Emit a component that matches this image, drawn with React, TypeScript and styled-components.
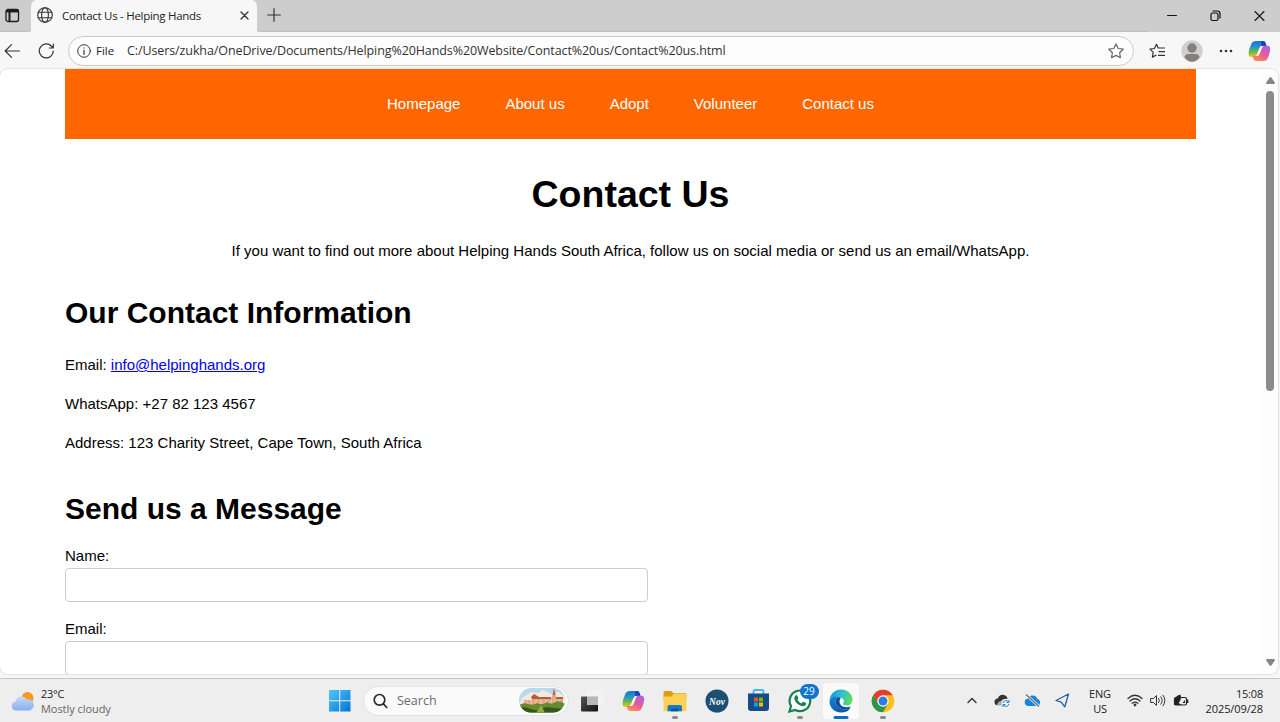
import React from "react";
import styled, { createGlobalStyle } from "styled-components";

const GlobalStyle = createGlobalStyle`
  * { box-sizing: border-box; }
  html, body { margin: 0; padding: 0; overflow: hidden; }
  svg { display: block; flex: none; }
`;

const UI_FONT = `"Open Sans", "Noto Sans", sans-serif`;

const Screen = styled.div`
  width: 1280px;
  height: 722px;
  display: flex;
  flex-direction: column;
  overflow: hidden;
  background: #f7f7f7;
  font-family: ${UI_FONT};
  color: #1f1f1f;
`;

const Label = styled.span<{ $size?: number; $track?: number; $color?: string }>`
  white-space: pre;
  font-size: ${(p) => p.$size ?? 12}px;
  letter-spacing: ${(p) => p.$track ?? 0}px;
  color: ${(p) => p.$color ?? "#222"};
`;

const TabStrip = styled.header`
  flex: none;
  height: 32px;
  display: flex;
  background: #cdcdcd;
`;
const TabActions = styled.div`
  width: 31px;
  padding: 8px 0 0 5px;
  border-bottom: 1px solid #bfbfbf;
  border-bottom-right-radius: 5px;
`;
const Tab = styled.div`
  width: 226px;
  display: flex;
  align-items: center;
  padding: 0 8px 2px 6px;
  background: #f7f7f7;
  border-radius: 6px 6px 0 0;
`;
const TabTitle = styled(Label)`
  margin-left: 9px;
  flex: 1;
`;
const NewTab = styled.div`
  flex: 1;
  padding: 8px 0 0 10px;
  border-bottom: 1px solid #bfbfbf;
  border-bottom-left-radius: 5px;
`;
const WindowButtons = styled.div`
  width: 132px;
  display: flex;
  justify-content: space-between;
  padding: 9px 15px 0 19px;
`;

const Toolbar = styled.div`
  flex: none;
  height: 37px;
  display: flex;
  align-items: center;
  padding: 0 9px 0 4px;
`;
const NavButtons = styled.div`
  width: 64px;
  display: flex;
  gap: 17px;
`;
const AddressBar = styled.div`
  width: 1066px;
  height: 30px;
  display: flex;
  align-items: center;
  padding: 0 9px 0 8px;
  background: #fdfdfd;
  border: 1px solid #cbcbcb;
  border-radius: 15px;
`;
const Scheme = styled(Label)`
  width: 31px;
  margin: 0 0 0 5px;
`;
const Url = styled(Label)`
  flex: 1;
`;
const ToolbarIcons = styled.div`
  flex: 1;
  display: flex;
  align-items: center;
  justify-content: space-between;
  padding-left: 15px;
`;

const Viewport = styled.div`
  flex: none;
  width: 1278px;
  height: 605px;
  display: flex;
  overflow: hidden;
  background: #fff;
  border-radius: 8px;
  box-shadow: 0 0 1px 1px #e0e0e0;
`;
const Page = styled.main`
  width: 1261px;
  height: 605px;
  padding: 0 65px;
  overflow: hidden;
  font-family: "Liberation Sans", Arial, sans-serif;
  font-size: 15px;
  color: #000;
`;
const SiteNav = styled.nav`
  height: 70px;
  display: flex;
  justify-content: center;
  gap: 45px;
  padding-top: 26px;
  background: #ff6600;
  color: #fff;
  line-height: 17px;
`;
const Title = styled.h1`
  margin: 32px 0 0;
  font-size: 37.5px;
  line-height: 46px;
  text-align: center;
`;
const Intro = styled.p`
  margin: 25px 0 0;
  line-height: 18px;
  text-align: center;
`;
const Heading = styled.h2<{ $top: number }>`
  margin: ${(p) => p.$top}px 0 0;
  font-size: 30px;
  line-height: 36px;
`;
const ContactList = styled.div`
  display: flex;
  flex-direction: column;
  gap: 21px;
  padding-top: 25px;
  line-height: 18px;
`;
const MailLink = styled.a`
  color: #0000ee;
  text-decoration: underline;
`;
const Field = styled.label<{ $top: number }>`
  display: block;
  margin-top: ${(p) => p.$top}px;
  line-height: 18px;
`;
const TextInput = styled.input`
  display: block;
  width: 583px;
  height: 34px;
  margin-top: 3px;
  background: #fff;
  border: 1px solid #ccc;
  border-radius: 4px;
`;
const Scrollbar = styled.div`
  flex: 1;
  display: flex;
  flex-direction: column;
  align-items: center;
  padding: 8px 0 8px 1px;
  background: #fdfdfd;
`;
const Thumb = styled.div`
  width: 8px;
  height: 300px;
  margin: 7px 0 auto;
  border-radius: 4px;
  background: #8b8b8b;
`;

const Taskbar = styled.footer`
  flex: none;
  height: 44px;
  margin-top: 4px;
  display: flex;
  align-items: center;
  background: #eee;
  border-top: 1px solid #c6c6c6;
`;
const Weather = styled.div`
  width: 328px;
  display: flex;
  align-items: center;
  gap: 6px;
  padding-left: 11px;
`;
const Stack = styled.div<{ $align: string }>`
  display: flex;
  flex-direction: column;
  align-items: ${(p) => p.$align};
  line-height: 15px;
`;
const SearchBox = styled.div`
  width: 206px;
  height: 30px;
  margin: 0 9px 0 12px;
  display: flex;
  align-items: center;
  padding: 0 3px 0 9px;
  background: #fafafa;
  border: 1px solid #e2e2e2;
  border-radius: 15px;
`;
const SearchText = styled(Label)`
  flex: 1;
  padding-left: 9px;
`;
const Apps = styled.div`
  display: flex;
  gap: 5.5px;
`;
const AppSlot = styled.div<{ $active?: boolean }>`
  position: relative;
  width: 36px;
  height: 36px;
  display: flex;
  align-items: center;
  justify-content: center;
  border-radius: 4px;
  background: ${(p) => (p.$active ? "#fafafa" : "transparent")};
`;
const RunMark = styled.i<{ $active?: boolean }>`
  position: absolute;
  bottom: 0;
  left: 50%;
  width: ${(p) => (p.$active ? 15 : 6)}px;
  height: 3px;
  transform: translateX(-50%);
  border-radius: 2px;
  background: ${(p) => (p.$active ? "#0f6cbd" : "#8a8a8a")};
`;
const Badge = styled.span`
  position: absolute;
  top: 1px;
  right: -1px;
  width: 19px;
  height: 15px;
  border-radius: 8px;
  background: #0f76cc;
  color: #fff;
  font-size: 10px;
  line-height: 15px;
  text-align: center;
`;
const Tray = styled.div`
  flex: 1;
  display: flex;
  align-items: center;
  justify-content: flex-end;
  padding-right: 17px;
`;
const TrayItem = styled.div<{ $w: number }>`
  width: ${(p) => p.$w}px;
  display: flex;
  justify-content: center;
`;

const line = { fill: "none", stroke: "#333", strokeWidth: 1.2, strokeLinecap: "round", strokeLinejoin: "round" } as const;

const CopilotIcon = ({ id }: { id: string }) => (
  <svg width="23" height="22" viewBox="0 0 23 22">
    <defs>
      <linearGradient id={`${id}a`} x1="0" y1="0" x2="0" y2="1">
        <stop offset="0" stopColor="#1b75d8" /><stop offset=".35" stopColor="#2394cf" /><stop offset=".65" stopColor="#62b851" /><stop offset="1" stopColor="#f4c315" />
      </linearGradient>
      <linearGradient id={`${id}b`} x1=".8" y1="0" x2=".2" y2="1">
        <stop offset="0" stopColor="#a964e8" /><stop offset=".5" stopColor="#e9599a" /><stop offset="1" stopColor="#fb9150" />
      </linearGradient>
    </defs>
    <path d="M8 1h7q2 0 2.6 2l.9 3h-2q-2 0-2.7 2l-2.4 7q-.8 2-2.9 2H3.500Q.2 17 .6 12.500Q1 9 3.500 3.500Q4.500 1 8 1Z" fill={`url(#${id}a)`} />
    <path d="M13 1h2q2 0 2.600 2l.9 3h-2.500q-2 0-2.700 2Z" fill="#1747b0" />
    <path d="M15 21H8q-2 0-2.600-2L4.800 16h1.700q2 0 2.800-2l2.400-6q.8-2.300 3-2.300h4.500q3.400 0 3 4.300Q22 13 19.500 18.500Q18.500 21 15 21Z" fill={`url(#${id}b)`} />
    <path d="M13.300 6q-1.300.4-1.800 2l-2.400 6q-.5 1.500-1.800 2h2.400q1.300-.4 1.800-2l2.400-6q.4-1.400 1.500-2Z" fill="#fff" />
  </svg>
);

const StarIcon = () => (
  <svg width="16" height="16" viewBox="0 0 16 16" {...line} stroke="#666">
    <path d="m8 1 2.200 4.500 5 .7-3.600 3.500.8 5L8 12.400 3.600 14.700l.8-5L.8 6.200l5-.7Z" />
  </svg>
);

const FavoritesIcon = () => (
  <svg width="17" height="16" viewBox="0 0 17 16" {...line}>
    <path d="M9.200 4.900 7.500 1.300 5.400 5.500 1 6.200l3.200 3.200-.8 4.700L7 12.200M9.200 5h6.300M10 8.700h5.500M9.500 12.400h6" />
  </svg>
);

const App = () => (
  <>
    <GlobalStyle />
    <Screen>
      <TabStrip>
        <TabActions>
          <svg width="15" height="15" viewBox="0 0 15 15" fill="none" stroke="#1d1d1d" strokeWidth="1.300">
            <rect x="1" y="1.500" width="12.500" height="12" rx="2" /><path d="M1 3.300h12.500M4.500 4v9" strokeWidth="2" />
            <path d="M1 3h12.500" strokeWidth="2.500" />
          </svg>
        </TabActions>
        <Tab>
          <svg width="16" height="16" viewBox="0 0 16 16" {...line} strokeWidth="1.100">
            <circle cx="8" cy="8" r="7.300" /><ellipse cx="8" cy="8" rx="3.400" ry="7.300" /><path d="M1.200 5.300h13.600M1.200 10.700h13.600" />
          </svg>
          <TabTitle $size={11.5} $track={-0.28}>Contact Us - Helping Hands</TabTitle>
          <svg width="9" height="9" viewBox="0 0 9 9" {...line} strokeWidth="1.300"><path d="m1 1 7 7M8 1 1 8" /></svg>
        </Tab>
        <NewTab>
          <svg width="14" height="14" viewBox="0 0 14 14" {...line}><path d="M7 .7v12.600M.7 7h12.600" /></svg>
        </NewTab>
        <WindowButtons>
          <svg width="10" height="12" viewBox="0 0 10 12" {...line} stroke="#111"><path d="M.6 6.500h8.800" /></svg>
          <svg width="11" height="13" viewBox="0 0 11 13" {...line} stroke="#111"><rect x="1" y="4" width="7" height="7.500" rx="1.500" /><path d="M3 2h4.500Q10 2 10 4.500V9" /></svg>
          <svg width="11" height="13" viewBox="0 0 11 13" {...line} stroke="#111" strokeWidth="1.100"><path d="m1 2.500 9 9M10 2.500l-9 9" /></svg>
        </WindowButtons>
      </TabStrip>

      <Toolbar>
        <NavButtons>
          <svg width="17" height="16" viewBox="0 0 17 16" {...line}><path d="M15.500 8H1.200M7.500 1.700 1.200 8l6.300 6.300" /></svg>
          <svg width="17" height="16" viewBox="0 0 17 16" {...line}><path d="M15.300 8a7 7 0 1 1-2-5l1.700 1.700M15.300 1v4h-4" /></svg>
        </NavButtons>
        <AddressBar>
          <svg width="14" height="14" viewBox="0 0 14 14" {...line} strokeWidth="1"><circle cx="7" cy="7" r="6.300" /><path d="M7 6.300v4M7 3.900v.2" strokeWidth="1.200" /></svg>
          <Scheme $size={11.5} $track={0}>File</Scheme>
          <Url $size={12.5} $track={-0.1} $color="#333">C:/Users/zukha/OneDrive/Documents/Helping%20Hands%20Website/Contact%20us/Contact%20us.html</Url>
          <StarIcon />
        </AddressBar>
        <ToolbarIcons>
          <FavoritesIcon />
          <svg width="22" height="22" viewBox="0 0 22 22">
            <circle cx="11" cy="11" r="10.700" fill="#d2d0ce" /><circle cx="11" cy="8" r="4.700" fill="#85807c" />
            <path d="M3.500 17.500q.5-3.500 3.500-3.500h8q3 0 3.500 3.500Q15.500 21.700 11 21.700t-7.500-4.200Z" fill="#85807c" />
          </svg>
          <svg width="14" height="4" viewBox="0 0 14 4" fill="#333"><circle cx="2" cy="2" r="1.300" /><circle cx="7" cy="2" r="1.300" /><circle cx="12" cy="2" r="1.300" /></svg>
          <CopilotIcon id="bar" />
        </ToolbarIcons>
      </Toolbar>

      <Viewport>
        <Page>
          <SiteNav>
            <span>Homepage</span><span>About us</span><span>Adopt</span><span>Volunteer</span><span>Contact us</span>
          </SiteNav>
          <Title>Contact Us</Title>
          <Intro>If you want to find out more about Helping Hands South Africa, follow us on social media or send us an email/WhatsApp.</Intro>
          <Heading $top={35}>Our Contact Information</Heading>
          <ContactList>
            <span>Email: <MailLink>info@helpinghands.org</MailLink></span>
            <span>WhatsApp: +27 82 123 4567</span>
            <span>Address: 123 Charity Street, Cape Town, South Africa</span>
          </ContactList>
          <Heading $top={39}>Send us a Message</Heading>
          <Field $top={20}>Name:<TextInput /></Field>
          <Field $top={18}>Email:<TextInput /></Field>
        </Page>
        <Scrollbar>
          <svg width="9" height="7" viewBox="0 0 9 7"><path d="M4.500 0Q5 0 5.500.8L8.800 5.500Q9 7 8 7H1Q0 7 .2 5.500L3.500.8Q4 0 4.500 0Z" fill="#858585" /></svg>
          <Thumb />
          <svg width="9" height="7" viewBox="0 0 9 7"><path d="M4.500 7Q5 7 5.500 6.200L8.800 1.500Q9 0 8 0H1Q0 0 .2 1.500L3.500 6.200Q4 7 4.500 7Z" fill="#858585" /></svg>
        </Scrollbar>
      </Viewport>

      <Taskbar>
        <Weather>
          <svg width="24" height="22" viewBox="0 0 24 22">
            <defs><linearGradient id="cloud" x1="0" y1="0" x2="0" y2="1"><stop offset="0" stopColor="#c5dafa" /><stop offset="1" stopColor="#85aff0" /></linearGradient></defs>
            <circle cx="16.500" cy="8" r="6" fill="#f69a1d" />
            <path d="M5 20.500a4.600 4.600 0 0 1-.5-9.100A6.300 6.300 0 0 1 16 9.500a5.500 5.500 0 0 1 2.500 11Z" fill="url(#cloud)" />
          </svg>
          <Stack $align="flex-start">
            <Label $size={11} $track={-0.3}>23°C</Label>
            <Label $size={11} $track={-0.05} $color="#666">Mostly cloudy</Label>
          </Stack>
        </Weather>
        <svg width="23" height="23" viewBox="0 0 23 23">
          <defs><linearGradient id="win" x1="0" y1="0" x2="1" y2="1"><stop offset="0" stopColor="#50c8f8" /><stop offset="1" stopColor="#0573d2" /></linearGradient></defs>
          <path d="M1 1h10.200v10.200H1ZM12.200 1H22.500v10.200H12.200ZM1 12.200h10.200V22.500H1ZM12.200 12.200H22.500V22.500H12.200Z" fill="url(#win)" />
        </svg>
        <SearchBox>
          <svg width="15" height="16" viewBox="0 0 15 16" fill="none" stroke="#2b2b2b" strokeWidth="1.700" strokeLinecap="round"><circle cx="6.500" cy="6.800" r="5.300" /><path d="m10.400 10.900 3.300 3.600" /></svg>
          <SearchText $size={12.5} $track={0} $color="#6b6b6b">Search</SearchText>
          <svg width="46" height="25" viewBox="0 0 46 25">
            <defs><clipPath id="oval"><rect width="46" height="24.500" rx="12.200" /></clipPath></defs>
            <g clipPath="url(#oval)">
              <rect width="46" height="25" fill="#b7dbec" />
              <path d="M3 10 12 4l7 1 5-3 8 4 8-2 6 5v8H0Z" fill="#f5e8e2" />
              <path d="M5 12h8V8h6v2h14V8l1.500-8L37 8v2h7v9H5Z" fill="#dfa987" />
              <path d="m12 9 3-3 5 3h12v2H13ZM34 7l1-7 1.500 7ZM37 9h7v2h-7Z" fill="#b85b3c" />
              <path d="M8 13v3M12 12v4M17 12v4M22 12v4M27 12v4M32 12v4M36 11v5M40 12v4" stroke="#f6d4b3" />
              <path d="M0 17q5-3 9-1 5 2 9-1 5 3 10-1 4 3 8 0 5-2 10 2v9H0Z" fill="#648b2e" />
              <path d="M0 20q6-2 12 1t15-2q8 1 19 2v4H0Z" fill="#31591d" />
              <path d="m17 25 5-8 4 8" fill="#91ac45" />
            </g>
          </svg>
        </SearchBox>
        <Apps>
          <AppSlot style={{ marginLeft: -4 }}>
            <svg width="23" height="22" viewBox="0 0 23 22">
              <defs><linearGradient id="tv" x1="0" y1="0" x2="1" y2="1"><stop offset="0" stopColor="#555" /><stop offset="1" stopColor="#111" /></linearGradient></defs>
              <rect x="0" y="6.500" width="17" height="15" rx="1" fill="url(#tv)" /><rect x="6" y="0" width="16.500" height="15" rx="1" fill="#f4f4f4" opacity=".88" /><path d="M6 6.500h11V15H6Z" fill="#b7b7b7" />
            </svg>
          </AppSlot>
          <AppSlot><CopilotIcon id="task" /></AppSlot>
          <AppSlot>
            <svg width="24" height="22" viewBox="0 0 24 22">
              <path d="M.5 2.500Q.5 1 2 1h6l2.500 2H22q1.500 0 1.500 1.500v5H.5Z" fill="#dc9d13" />
              <path d="M.5 6.500h8L11 3.500h11q1.500 0 1.500 1.500v15q0 1.300-1.500 1.300H2Q.5 21.300.5 20Z" fill="#fbd154" />
              <path d="M4.500 21.300V17q0-2 2-2h10.500q2 0 2 2v4.300Z" fill="#1778c8" /><path d="M8 18.500h7.500v2.800H8Z" fill="#0b5596" />
            </svg>
            <RunMark />
          </AppSlot>
          <AppSlot>
            <svg width="24" height="24" viewBox="0 0 24 24">
              <circle cx="12" cy="12" r="11.500" fill="#1b4f73" />
              <text x="12" y="15.500" textAnchor="middle" fill="#fff" fontFamily="Liberation Serif, serif" fontStyle="italic" fontWeight="bold" fontSize="9.500">Nov</text>
            </svg>
          </AppSlot>
          <AppSlot>
            <svg width="23" height="23" viewBox="0 0 23 23">
              <path d="M6.500 5V2.300Q6.500 1 8 1h7q1.500 0 1.500 1.300V5" fill="none" stroke="#43b8ef" strokeWidth="1.800" />
              <path d="M1 4.500h21V19q0 3-3 3H4q-3 0-3-3Z" fill="#164b85" />
              <path d="M7 8.500h4v4H7Z" fill="#f25022" /><path d="M12 8.500h4v4h-4Z" fill="#7fba00" /><path d="M7 13.500h4v4H7Z" fill="#00a4ef" /><path d="M12 13.500h4v4h-4Z" fill="#ffb900" />
            </svg>
          </AppSlot>
          <AppSlot>
            <svg width="24" height="24" viewBox="0 0 24 24">
              <path d="M1.500 22.500 3 17A10.300 10.300 0 1 1 7.200 21Z" fill="#fff" stroke="#17804f" strokeWidth="2.200" />
              <path d="M7.300 6.700q1.200-1.300 2 0l1 2.300q.2.700-.9 1.800 1.500 2.700 4 3.600l1.300-1.400q.5-.5 1.200-.1l2 1q.8.500.2 1.700-1.300 2-3.700 1.600-6-1.600-8-6.800-.4-2 .9-3.700Z" fill="#17804f" />
            </svg>
            <Badge>29</Badge>
            <RunMark />
          </AppSlot>
          <AppSlot $active>
            <svg width="24" height="24" viewBox="0 0 24 24">
              <defs>
                <linearGradient id="edgeTop" x1="0" y1=".3" x2="1" y2=".5"><stop offset="0" stopColor="#1b91dd" /><stop offset=".5" stopColor="#2bc1d2" /><stop offset="1" stopColor="#65dc55" /></linearGradient>
                <linearGradient id="edgeLow" x1="0" y1="0" x2="1" y2="1"><stop offset="0" stopColor="#1782d8" /><stop offset="1" stopColor="#0b4b99" /></linearGradient>
              </defs>
              <path d="M.5 11.500C1 5 6 .5 12 .5c7 0 11.500 5 11.500 10 0 4-3 6-6 6-2.500 0-4-1-3.500-2 1.500-2 1-5-2.500-6C7 7 3 8 .5 11.500Z" fill="url(#edgeTop)" />
              <path d="M.5 12C2 8 6 6.500 10 8c-3 1-4 4-3 7 1.500 4.500 6.500 6 11 5 2-.5 3-1.500 3.500-1-2 3-5.500 4.500-9.500 4.500C5 23.500.2 18 .5 12Z" fill="url(#edgeLow)" />
              <path d="M10 8c-3 1-4 4-3 7 1.500 4.500 6.500 6 11 5 2-.5 3.500-2 3.500-2.500-6 2-11-.5-11-5 0-2 1-3 1.500-3.500Q11 8.300 10 8Z" fill="#0d4f9d" />
            </svg>
            <RunMark $active />
          </AppSlot>
          <AppSlot>
            <svg width="24" height="24" viewBox="0 0 24 24">
              <circle cx="12" cy="12" r="11.300" fill="#fbc116" />
              <path d="M2.200 6.350A11.300 11.300 0 0 1 21.800 6.350L12 6.350 7.100 14.800Z" fill="#df4032" />
              <path d="M2.200 6.350A11.300 11.300 0 0 0 12 23.300L16.900 14.800H7.100Z" fill="#28984b" />
              <circle cx="12" cy="12" r="5.700" fill="#fff" /><circle cx="12" cy="12" r="4.500" fill="#3479e6" />
            </svg>
            <RunMark />
          </AppSlot>
        </Apps>
        <Tray>
          <TrayItem $w={30}><svg width="10" height="7" viewBox="0 0 10 7" {...line} strokeWidth="1.400"><path d="m1 5.500 4-4 4 4" /></svg></TrayItem>
          <TrayItem $w={30}>
            <svg width="17" height="14" viewBox="0 0 17 14">
              <path d="M4 11.500a3.500 3.500 0 0 1-.2-7A5 5 0 0 1 13.300 5Q16 6 16 8v3.500Z" fill="#aaa" /><path d="M1 10Q-.5 5 4 4.500 5.500 0 10 1q3 .5 3.500 4Q9 4 7 7q-3 0-4 4Q1.500 11 1 10Z" fill="#333" />
              <circle cx="12" cy="9.500" r="4.500" fill="#f7fbff" /><path d="M9 9a3 3 0 0 1 5.500-1M15 6v2.500h-2.500M15 10a3 3 0 0 1-5.500 1M9 13v-2.500h2.500" fill="none" stroke="#1678ce" />
            </svg>
          </TrayItem>
          <TrayItem $w={30}>
            <svg width="17" height="13" viewBox="0 0 17 13"><path d="M4 12a3.800 3.800 0 0 1-.2-7.500A5.200 5.200 0 0 1 13.400 5 3.600 3.600 0 0 1 13 12Z" fill="#1684db" /><path d="m2 .5 13 12" stroke="#eee" strokeWidth="2.800" /><path d="m2 .5 13 12" stroke="#666" strokeWidth="1.100" /></svg>
          </TrayItem>
          <TrayItem $w={30}><svg width="15" height="15" viewBox="0 0 15 15" fill="none" stroke="#245ca8" strokeWidth="1.300" strokeLinejoin="round"><path d="M13.500 1 1 7.500l5.200 1.700 3.600 4.600Z" /></svg></TrayItem>
          <TrayItem $w={46}><Stack $align="center"><Label $size={11} $track={-0.2}>ENG</Label><Label $size={11} $track={-0.2}>US</Label></Stack></TrayItem>
          <TrayItem $w={24}>
            <svg width="16" height="13" viewBox="0 0 16 13" {...line}><path d="M1 4.500q7-6.500 14 0M3 7q5-4.500 10 0M5.200 9.300q2.800-2.500 5.600 0" /><circle cx="8" cy="11" r=".8" fill="#333" /></svg>
          </TrayItem>
          <TrayItem $w={22}>
            <svg width="16" height="13" viewBox="0 0 16 13" {...line} strokeWidth="1"><path d="M1 4.500h2.500l3-3v10l-3-3H1ZM8.700 4.500q1.500 2 0 4M10.800 2.800q3 3.700 0 7.400M13 1.200q4 5.300 0 10.600" /></svg>
          </TrayItem>
          <TrayItem $w={23}>
            <svg width="16" height="13" viewBox="0 0 16 13"><rect x="1.500" y="3.500" width="12" height="7.500" rx="1.500" fill="#eee" stroke="#222" strokeWidth="1.200" /><path d="M14.500 5.500v3.500" stroke="#222" strokeWidth="1.600" /><path d="M1 8Q1 2 7.500 .500 9 6 5.500 9L9 11H1Z" fill="#222" /><path d="m9.500 9 2.500-3v3Z" fill="#222" /></svg>
          </TrayItem>
          <TrayItem $w={71} style={{ justifyContent: "flex-end" }}>
            <Stack $align="flex-end"><Label $size={11} $track={-0.2}>15:08</Label><Label $size={11} $track={-0.1}>2025/09/28</Label></Stack>
          </TrayItem>
        </Tray>
      </Taskbar>
    </Screen>
  </>
);

export default App;
